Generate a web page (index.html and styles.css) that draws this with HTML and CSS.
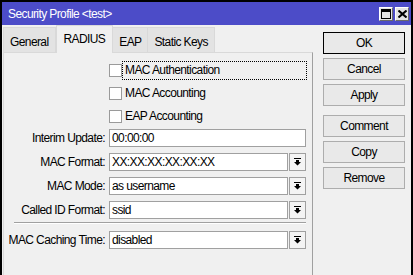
FILE: index.html
```html
<!DOCTYPE html>
<html>
<head>
<meta charset="utf-8">
<link rel="stylesheet" href="styles.css">
</head>
<body>
<div class="window">
  <div class="titlebar">
    <span class="title">Security Profile &lt;test&gt;</span>
    <div class="tbtns">
      <span class="tbtn"><svg width="10" height="10" viewBox="0 0 10 10"><path d="M0 0h10v10H0z M1 3v6h8V3z" fill="#000" fill-rule="evenodd"/></svg></span>
      <span class="tbtn"><svg width="9" height="8" viewBox="0 0 9 8"><path d="M0.5 0.5l8 7M8.5 0.5l-8 7" stroke="#000" stroke-width="2"/></svg></span>
    </div>
  </div>
  <div class="body">
    <div class="left">
      <div class="tabs">
        <div class="tab">General</div>
        <div class="tab sel">RADIUS</div>
        <div class="tab">EAP</div>
        <div class="tab">Static Keys</div>
      </div>
      <div class="panel">
        <div class="crow"><span class="cb"></span><span class="clabel focus">MAC Authentication</span></div>
        <div class="crow"><span class="cb"></span><span class="clabel">MAC Accounting</span></div>
        <div class="crow last"><span class="cb"></span><span class="clabel">EAP Accounting</span></div>
        <div class="frow"><span class="lbl">Interim Update:</span><div class="input">00:00:00</div></div>
        <div class="frow"><span class="lbl">MAC Format:</span><div class="input">XX:XX:XX:XX:XX:XX</div><span class="dd"><svg width="7" height="8" viewBox="0 0 7 8"><path d="M0 0h7v1H0z M2 2h3v2h2L3.5 7.5 0 4h2z" fill="#000"/></svg></span></div>
        <div class="frow"><span class="lbl">MAC Mode:</span><div class="input">as username</div><span class="dd"><svg width="7" height="8" viewBox="0 0 7 8"><path d="M0 0h7v1H0z M2 2h3v2h2L3.5 7.5 0 4h2z" fill="#000"/></svg></span></div>
        <div class="frow"><span class="lbl">Called ID Format:</span><div class="input">ssid</div><span class="dd"><svg width="7" height="8" viewBox="0 0 7 8"><path d="M0 0h7v1H0z M2 2h3v2h2L3.5 7.5 0 4h2z" fill="#000"/></svg></span></div>
        <div class="sep"></div>
        <div class="frow"><span class="lbl">MAC Caching Time:</span><div class="input">disabled</div><span class="dd"><svg width="7" height="8" viewBox="0 0 7 8"><path d="M0 0h7v1H0z M2 2h3v2h2L3.5 7.5 0 4h2z" fill="#000"/></svg></span></div>
      </div>
    </div>
    <div class="right">
      <div class="btn default">OK</div>
      <div class="btn">Cancel</div>
      <div class="btn group-end">Apply</div>
      <div class="btn">Comment</div>
      <div class="btn">Copy</div>
      <div class="btn">Remove</div>
    </div>
  </div>
</div>
</body>
</html>
```
FILE: styles.css
```css
html, body {
  margin: 0;
  padding: 0;
  overflow: hidden;
}
body {
  font-family: "Liberation Sans", Arial, sans-serif;
  font-size: 12px;
  letter-spacing: -0.6px;
  color: #000;
  background: #f0f0f0;
}
.window {
  width: 413px;
  height: 275px;
  box-sizing: border-box;
  border: 2px solid #000;
  border-bottom: none;
  background: #f0f0f0;
  display: flex;
  flex-direction: column;
}
.titlebar {
  height: 23px;
  flex: none;
  background: #4c4cc8;
  display: flex;
  align-items: center;
  padding: 0 2px 0 6px;
}
.title {
  color: #fff;
  flex: 1;
}
.tbtns {
  display: flex;
  gap: 2px;
}
.tbtn {
  width: 14px;
  height: 14px;
  box-sizing: border-box;
  background: #e4e4e4;
  border: 1px solid;
  border-color: #fff #6a6a6a #6a6a6a #fff;
  display: flex;
  align-items: center;
  justify-content: center;
}
.body {
  flex: 1;
  display: flex;
  padding-left: 1px;
  min-height: 0;
}
.left {
  width: 310px;
  display: flex;
  flex-direction: column;
}
.tabs {
  display: flex;
  height: 27px;
  flex: none;
  position: relative;
  z-index: 1;
}
.tab {
  margin-top: 2px;
  height: 25px;
  box-sizing: border-box;
  padding: 4px 6px 0 6px;
  background: #e3e3e3;
  border: 1px solid #d9d9d9;
  border-bottom: none;
  display: flex;
  align-items: center;
}
.tab + .tab {
  border-left: none;
}
.tab.sel {
  margin-top: 0;
  height: 28px;
  padding: 0 7px 1px 7px;
  background: #f0f0f0;
  border-left: 1px solid #d9d9d9;
}
.tab.sel + .tab {
  border-left: none;
}
.panel {
  flex: 1;
  border: 1px solid #d9d9d9;
  border-right-color: #a0a0a0;
  border-bottom: none;
  padding: 8px 6px 0 0;
  display: flex;
  flex-direction: column;
}
.crow {
  height: 18px;
  display: flex;
  align-items: center;
  padding-left: 105px;
  margin-bottom: 5px;
}
.crow.last {
  margin-bottom: 4px;
}
.cb {
  width: 13px;
  height: 13px;
  box-sizing: border-box;
  border: 1px solid #9a9a9a;
  background: #fff;
  flex: none;
}
.clabel {
  flex: 1;
  margin-left: 1px;
  padding-left: 2px;
  height: 17px;
  line-height: 17px;
  box-sizing: border-box;
}
.clabel.focus {
  outline: 1px dotted #000;
  outline-offset: 0;
}
.frow {
  height: 18px;
  display: flex;
  align-items: stretch;
  margin-bottom: 6px;
}
.lbl {
  width: 101px;
  flex: none;
  text-align: right;
  margin-right: 4px;
  line-height: 18px;
}
.input {
  flex: 1;
  box-sizing: border-box;
  border: 1px solid #a0a0a0;
  background: #fff;
  padding-left: 2px;
  line-height: 16px;
}
.dd {
  width: 17px;
  flex: none;
  margin-left: 1px;
  box-sizing: border-box;
  border: 1px solid #a0a0a0;
  background: #f4f4f4;
  display: flex;
  align-items: center;
  justify-content: center;
}
.sep {
  height: 0;
  margin: -3px 0 7px 10px;
  border-top: 1px solid #a0a0a0;
  border-bottom: 1px solid #fff;
}
.right {
  margin-left: 10px;
  padding-top: 7px;
  display: flex;
  flex-direction: column;
}
.btn {
  width: 82px;
  height: 22px;
  box-sizing: border-box;
  border: 1px solid #adadad;
  background: #e9e9e9;
  display: flex;
  align-items: center;
  justify-content: center;
  margin-bottom: 4px;
}
.btn.default {
  border-color: #000;
}
.btn.group-end {
  margin-bottom: 9px;
}
```
